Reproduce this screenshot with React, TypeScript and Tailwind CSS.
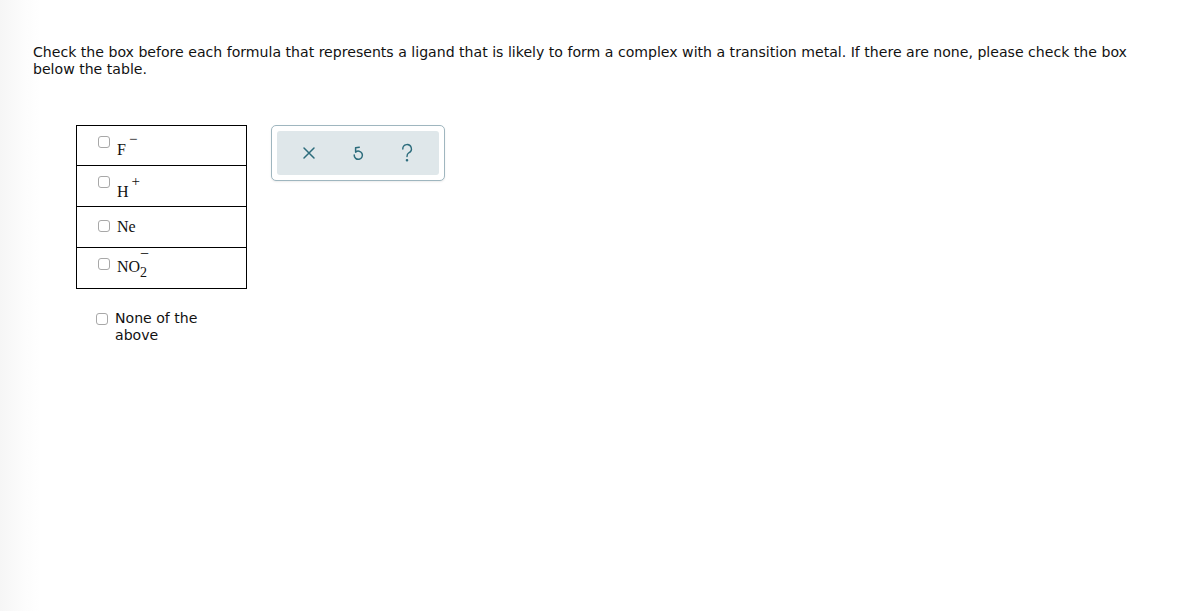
import React from "react";

const Box = () => (
  <span className="block w-[12px] h-[12px] rounded-[3px] border border-[#a8a8a8] bg-white shrink-0" />
);

const rows: { base: string; sup?: string; sub?: string; box: string; text: string }[] = [
  { base: "F", sup: "−", box: "mt-[10px]", text: "mt-[15px]" },
  { base: "H", sup: "+", box: "mt-[10px]", text: "mt-[17px]" },
  { base: "Ne", box: "mt-[13px]", text: "mt-[11px]" },
  { base: "NO", sub: "2", sup: "−", box: "mt-[10px]", text: "mt-[10px]" },
];

const App = () => {
  return (
    <div className="min-h-[611px] w-full bg-[linear-gradient(to_right,#f6f6f6,#fcfcfc_24px,#ffffff_40px)] font-['DejaVu_Sans',Verdana,sans-serif] text-[#111]">
      <div className="pl-[33px] pr-[40px] pt-[44px]">
        <p className="text-[14.1px] leading-[17px]">
          Check the box before each formula that represents a ligand that is likely to form a complex with a transition metal. If there are none, please check the box below the table.
        </p>

        <div className="flex items-start mt-[47px] ml-[43px] gap-[24px]">
          <div className="flex flex-col">
            <div className="w-[171px] border border-black">
              {rows.map((r, i) => (
                <div
                  key={r.base}
                  className={`box-content flex items-start pl-[21px] gap-[7px] ${i > 0 ? "h-[40px] border-t border-black" : "h-[39px]"}`}
                >
                  <div className={`shrink-0 ${r.box}`}>
                    <Box />
                  </div>
                  <span className={`font-['Liberation_Serif',serif] text-[16px] leading-[18px] ${r.text}`}>
                    {r.base}
                    {r.sub ? (
                      <span className="relative inline-block w-[8px]">
                        <span className="absolute left-0 top-[-12px] text-[16px] leading-none">−</span>
                        <span className="relative top-[5px] text-[14px] leading-none">{r.sub}</span>
                      </span>
                    ) : r.sup ? (
                      <span className="relative top-[-11px] ml-[3px] text-[15px] leading-none">{r.sup}</span>
                    ) : null}
                  </span>
                </div>
              ))}
            </div>
            <div className="flex items-start gap-[7px] pl-[20px] mt-[21px]">
              <div className="mt-[3px] shrink-0">
                <Box />
              </div>
              <span className="w-[95px] text-[14.1px] leading-[17px]">None of the above</span>
            </div>
          </div>

          <div className="w-[174px] h-[56px] rounded-[5px] border border-[#9fb6bf] bg-white p-[5px] shadow-[0_1px_2px_rgba(0,0,0,0.08)]">
            <div className="h-full rounded-[3px] bg-[#dfe7ea] flex items-center justify-around px-[8px] text-[#2c6c7c]">
              <svg width="14" height="14" viewBox="0 0 14 14" fill="none" stroke="currentColor" strokeWidth="1.5" strokeLinecap="round">
                <path d="M2 2 L12 12 M12 2 L2 12" />
              </svg>
              <svg width="14" height="18" viewBox="0 0 14 18" fill="none" stroke="currentColor" strokeWidth="1.5" strokeLinecap="round" strokeLinejoin="round">
                <path d="M8.3 3.2 L4.6 3.8 L4.6 7.6" />
                <path d="M4.6 8.1 A4.1 4.1 0 1 1 3.2 11" />
              </svg>
              <svg width="14" height="20" viewBox="0 0 14 20" fill="none" stroke="currentColor" strokeWidth="1.4" strokeLinecap="round">
                <path d="M2.8 6 A4.3 4.3 0 1 1 8.8 9.8 C7.4 10.8 7 11.8 7 13.6" />
                <circle cx="7" cy="17.3" r="0.6" fill="currentColor" />
              </svg>
            </div>
          </div>
        </div>
      </div>
    </div>
  );
};

export default App;
